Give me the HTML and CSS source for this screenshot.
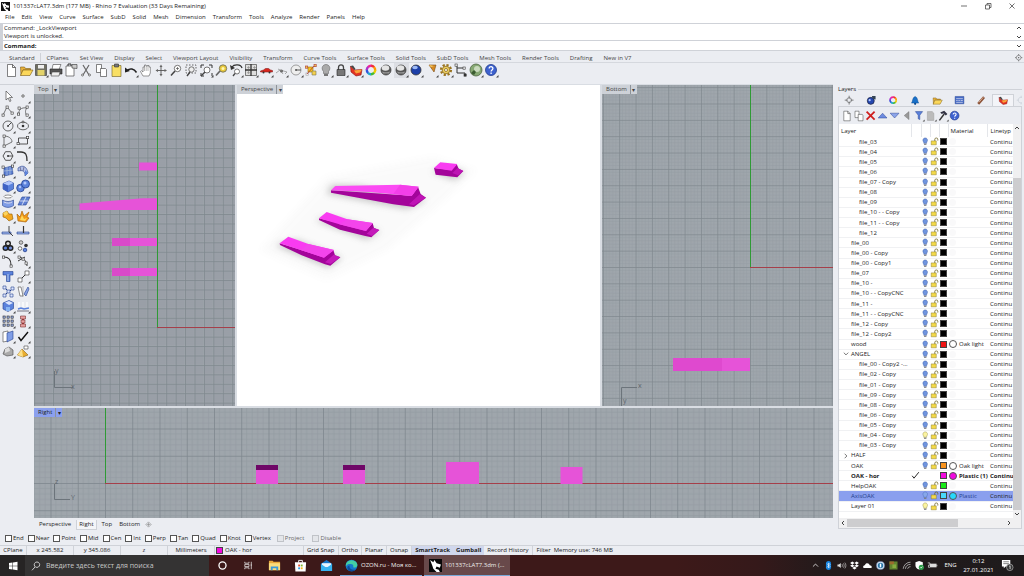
FILE: index.html
```html
<!DOCTYPE html>
<html lang="en">
<head>
<meta charset="utf-8">
<title>101337cLAT7.3dm (177 MB) - Rhino 7 Evaluation</title>
<link rel="stylesheet" href="styles.css">
</head>
<body>
<header class="titlebar">
  <svg class="app-icon" viewBox="0 0 12 12"><rect width="12" height="12" fill="#111"/><path d="M1 1l3 2 1-2 2 3 4 1-1 3-3-1-1 2 3 1 1 2H7L4 9 3 6z" fill="#fff"/><path d="M5 5l2 1-1 1z" fill="#111"/></svg>
  <h1 class="title">101337cLAT7.3dm (177 MB) - Rhino 7 Evaluation (33 Days Remaining)</h1>
  <div class="window-buttons">
    <button aria-label="Minimize"><svg viewBox="0 0 10 10"><path d="M2 5h6" class="ln"/></svg></button>
    <button aria-label="Restore"><svg viewBox="0 0 10 10"><path d="M2.500 4h4v4h-4zM4 4V2.500h4v4H6.500" class="ln"/></svg></button>
    <button aria-label="Close"><svg viewBox="0 0 10 10"><path d="M2.500 2.500l5 5m0-5l-5 5" class="ln"/></svg></button>
  </div>
</header>
<nav class="menu" id="menu"></nav>
<section class="command">
  <div class="history"><p>Command: _LockViewport</p><p>Viewport is unlocked.</p></div>
  <label class="prompt"><b>Command:</b><input type="text" aria-label="Command"></label>
  <div class="command-scroll"><svg viewBox="0 0 8 8"><path d="M2 5l2-2 2 2"/></svg><svg viewBox="0 0 8 8"><path d="M2 3l2 2 2-2"/></svg><svg viewBox="0 0 8 8"><path d="M2 3l2 2 2-2"/></svg></div>
</section>
<nav class="tabs" id="tabs"></nav>
<div class="toolbar" id="toolbar"></div>

<div class="work">
  <aside class="tools" id="tools"></aside>
  <div class="center">
    <main class="views">
      <section class="view top">
        <svg class="scene">
          <defs>
            <pattern id="gTop" width="9.430" height="9.430" x="122.800" y="242.200" patternUnits="userSpaceOnUse"><rect width="9.430" height="9.430" fill="#9fa6ac"/><path d="M1.886 0v9.430M3.772 0v9.430M5.658 0v9.430M7.544 0v9.430M0 1.886h9.430M0 3.772h9.430M0 5.658h9.430M0 7.544h9.430" stroke="#939aa1" stroke-width=".6"/><path d="M.4 0v9.430M0 .4h9.430" stroke="#7e868e" stroke-width=".8"/></pattern>
          </defs>
          <rect width="100%" height="100%" fill="url(#gTop)"/>
          <rect class="y-axis" x="123" y="0" width="1" height="242"/><rect class="x-axis" x="123" y="242" width="100%" height="1"/>
          <g fill="#e653d8"><rect x="105" y="77.500" width="18" height="8"/><path d="M45.500 118.500L100 114l8-.7h15V125H45.500z"/><rect x="78" y="153" width="45" height="8"/><rect x="78" y="183" width="45" height="8"/></g>
          <path d="M78 153h18v8H78zM78 183h18v8H78z" fill="#d94ac9"/>
          <path d="M20.500 286v16.500H39" class="axis"/><text x="21" y="288" class="axis-label">y</text><text x="37" y="304" class="axis-label">x</text>
        </svg>
        <h2 class="view-title"><span>Top</span><button aria-label="Top view menu">▾</button></h2>
      </section>
      <section class="view perspective">
        <svg class="scene">
          <defs><filter id="soft" x="-50%" y="-50%" width="200%" height="200%"><feGaussianBlur stdDeviation="11"/></filter></defs>
          <g transform="translate(23 65) scale(.3333)">
            <g filter="url(#soft)" opacity=".42" fill="#777"><path d="M515 65L585 90L615 66L560 50zM200 130L440 176L500 150L300 108L215 105zM165 210L320 268L360 244L220 200zM45 285L205 352L245 324L110 270z"/></g>
            <g filter="url(#soft)" opacity=".03" fill="#777"><path d="M0 300L200 390L380 300L520 180L650 60L520 20L200 80z"/></g>
            <path d="M522 54L574 60L590 42L596 56L610 63L592 82L527 74z" fill="#a3049a"/><path d="M522 54L541 37L592 42L575 62z" fill="#f93bf1"/><path d="M577 69l16-15 17 9-16 13z" fill="#bd14b3"/>
            <path d="M213 121L455 137L474 110L482 132L498 143L462 171L400 163L213 128z" fill="#a3049a"/><path d="M213 121L226 108L420 104L476 110L455 138L400 133L330 126z" fill="#fb4bf3"/><path d="M400 132L420 104L476 110L455 138z" fill="#f33fe9"/><path d="M447 163l32-30 19 10-37 23z" fill="#bf14b5"/>
            <path d="M177 205L319 240L338 219L342 234L358 240L334 262L316 258L240 239L177 210z" fill="#a3049a"/><path d="M177 205L200 186L262 208L338 219L318 243L238 223z" fill="#f93bf1"/><path d="M238 223L262 208L338 219L318 243z" fill="#f345eb"/><path d="M320 251l20-18 18 7-22 18z" fill="#c41aba"/>
            <path d="M59 280L190 321L220 300L225 316L241 322L211 347L195 343L125 316L60 285z" fill="#a3049a"/><path d="M59 280L85 260L145 282L222 300L192 323L122 300z" fill="#f93bf1"/><path d="M122 300L145 282L222 300L192 323z" fill="#f345eb"/><path d="M195 337l26-23 20 8-29 20z" fill="#c41aba"/>
          </g>
        </svg>
        <h2 class="view-title"><span>Perspective</span><button aria-label="Perspective view menu">▾</button></h2>
      </section>
      <section class="view bottom">
        <svg class="scene">
          <defs><pattern id="gBottom" width="16.350" height="16.350" x="148" y="182" patternUnits="userSpaceOnUse"><rect width="16.350" height="16.350" fill="#9fa6ac"/><path d="M3.270 0v16.350M6.540 0v16.350M9.810 0v16.350M13.080 0v16.350M0 3.270h16.350M0 6.540h16.350M0 9.810h16.350M0 13.080h16.350" stroke="#959ca3" stroke-width=".6"/><path d="M.4 0v16.350M0 .4h16.350" stroke="#7f878f" stroke-width=".8"/></pattern></defs>
          <rect width="100%" height="100%" fill="url(#gBottom)"/>
          <rect class="y-axis" x="148" y="0" width="1" height="182"/><rect class="x-axis" x="148" y="182" width="100%" height="1"/>
          <rect x="71" y="273" width="77" height="13" fill="#e653d8"/><rect x="71" y="273" width="49" height="13" fill="#df49cf"/>
          <path d="M19.500 322v-19.500H35" class="axis"/><text x="36" y="303" class="axis-label">x</text><text x="21" y="318" class="axis-label">y</text>
        </svg>
        <h2 class="view-title"><span>Bottom</span><button aria-label="Bottom view menu">▾</button></h2>
      </section>
      <section class="view right">
        <svg class="scene">
          <defs><pattern id="gRight" width="27.250" height="27.250" x="71" y="75" patternUnits="userSpaceOnUse"><rect width="27.250" height="27.250" fill="#9fa6ac"/><path d="M5.450 0v27.250M10.900 0v27.250M16.350 0v27.250M21.800 0v27.250M0 5.450h27.250M0 10.900h27.250M0 16.350h27.250M0 21.800h27.250" stroke="#949ba1" stroke-width=".7"/><path d="M.5 0v27.250M0 .5h27.250" stroke="#7f878f" stroke-width=".8"/></pattern></defs>
          <rect width="100%" height="100%" fill="url(#gRight)"/>
          <rect class="y-axis" x="71" y="0" width="1" height="75"/><rect class="x-axis" x="71" y="75" width="100%" height="1"/>
          <g fill="#e653d8"><rect x="222" y="57" width="22" height="19"/><rect x="309" y="57" width="22" height="19"/><rect x="412" y="54" width="33" height="22"/><rect x="526.500" y="59" width="22" height="17"/></g>
          <path d="M222 57h22v5h-22zM309 57h22v5h-22z" fill="#6f0767"/>
          <path d="M20.500 76v15.500H36" class="axis"/><text x="21" y="76" class="axis-label">z</text><text x="37" y="92" class="axis-label">Y</text>
        </svg>
        <h2 class="view-title active"><span>Right</span><button aria-label="Right view menu">▾</button></h2>
      </section>
    </main>
    <nav class="view-tabs"><a href="#">Perspective</a><a href="#" class="on">Right</a><a href="#">Top</a><a href="#">Bottom</a><button aria-label="New layout"><svg viewBox="0 0 8 8"><path d="M4 1l3 3-3 3-3-3zM4 2v4M2 4h4" fill="none" stroke="#888" stroke-width=".7"/></svg></button></nav>
  </div>
  <aside class="panel">
    <h2 class="panel-title">Layers</h2>
    <div class="panel-tabs" id="panelTabs"></div>
    <div class="panel-box">
      <div class="panel-tools" id="panelTools"></div>
      <div class="list">
        <div class="list-body">
          <table>
            <colgroup><col class="c-name"><col class="c-cur"><col class="c-ico"><col class="c-ico"><col class="c-ico"><col class="c-mat"><col class="c-line"></colgroup>
            <thead><tr><th>Layer</th><th></th><th></th><th></th><th></th><th>Material</th><th>Linetyp</th></tr></thead>
            <tbody id="layers"></tbody>
          </table>
        </div>
        <div class="vscroll"><svg viewBox="0 0 8 8"><path d="M2 5l2-2 2 2"/></svg><i></i><svg viewBox="0 0 8 8"><path d="M2 3l2 2 2-2"/></svg></div>
      </div>
      <div class="hscroll"><svg viewBox="0 0 8 8"><path d="M5 2L3 4l2 2"/></svg><i></i><svg viewBox="0 0 8 8"><path d="M3 2l2 2-2 2"/></svg></div>
    </div>
  </aside>
</div>

<div class="osnaps" id="osnaps"></div>
<footer class="status">
  <span class="s-plane">CPlane</span><span class="s-coord">x 245.582</span><span class="s-coord">y 345.086</span><span class="s-coord">z</span><span class="s-units">Millimeters</span><span class="s-layer"><i></i>OAK - hor</span>
  <button>Grid Snap</button><button>Ortho</button><button>Planar</button><button>Osnap</button><button class="on">SmartTrack</button><button class="on">Gumball</button><button>Record History</button><button class="last">Filter</button><span class="s-mem">Memory use: 746 MB</span>
</footer>
<div class="taskbar">
  <button class="start" aria-label="Start"><svg viewBox="0 0 10 10"><path d="M1 2l3.500-.5v3.200H1zM5 1.400L9.500.7v4H5zM1 5.300h3.500v3.200L1 8zM5 5.300h4.500v4L5 8.600z" fill="#fff"/></svg></button>
  <label class="search"><svg viewBox="0 0 10 10"><path d="M6 1a2.700 2.700 0 1 1-.1 0zM4 6L1 9.300" fill="none" stroke="#ddd" stroke-width=".9"/></svg><input type="text" placeholder="Введите здесь текст для поиска" aria-label="Поиск"></label>
  <button class="pin" aria-label="Cortana"><svg viewBox="0 0 14 14"><circle cx="7" cy="7" r="3.800" fill="none" stroke="#fff" stroke-width="1.400"/></svg></button>
  <button class="pin" aria-label="Task view"><svg viewBox="0 0 14 14"><path d="M3 3v1.500h4.500V3M3 11V9.500h4.500V11M3 5.800h4.500v2.400H3zM10 3v8M9.300 6.500h1.400" fill="none" stroke="#eee" stroke-width=".8"/></svg></button>
  <button class="pin" aria-label="Explorer"><svg viewBox="0 0 14 14"><path d="M1 2h4l1 1h7v9H1z" fill="#e9a93b"/><path d="M1 4.500h12V12H1z" fill="#fbdc7c"/><path d="M3 12V8h8v4H9v-2H5v2z" fill="#3a9ad9"/></svg></button>
  <button class="pin" aria-label="Store"><svg viewBox="0 0 14 14"><path d="M5 4V1.500h4V4" fill="none" stroke="#fff"/><path d="M1 3.500h12l-.5 10h-11z" fill="#fff"/><path d="M4.500 6h2v2h-2z" fill="#e8502f"/><path d="M7.300 6h2v2h-2z" fill="#7cb82f"/><path d="M4.500 9h2v2h-2z" fill="#2f9fe8"/><path d="M7.300 9h2v2h-2z" fill="#f7b51c"/></svg></button>
  <button class="pin" aria-label="Mail"><svg viewBox="0 0 14 14"><path d="M1 5l6-4 6 4v8H1z" fill="#1877c9"/><path d="M2 4.500h10V9H2z" fill="#e8f5ff"/><path d="M1 5.500l6 4 6-4V13H1z" fill="#36b2f0"/></svg></button>
  <button class="task"><svg viewBox="0 0 14 14"><circle cx="7" cy="7" r="6.300" fill="#1679cc"/><path d="M1 5.500C2.500.5 11-.5 13.200 5.500c.6 3-2 4-4.700 3.500C10 7 8 5 5.500 5.500 3.500 5.500 2 6 .9 8z" fill="#44cfa5"/><path d="M5 7c-1 3 2 5.500 6.500 4.200C9 14.500 3 14 2.500 9.500 2.500 8 4 7 5 7z" fill="#0b4c9a"/></svg>OZON.ru - Моя ко...</button>
  <button class="task on"><svg viewBox="0 0 12 12"><rect width="12" height="12" fill="#080808"/><path d="M1 1l3 2 1-2 2 3 4 1-1 3-3-1-1 2 3 1 1 2H7L4 9 3 6z" fill="#fff"/></svg>101337cLAT7.3dm (...</button>
  <div class="tray" id="tray"></div>
  <button class="lang">ENG</button>
  <time class="clock"><span>0:12</span><span>27.01.2021</span></time>
  <button class="notify" aria-label="Notifications"><svg viewBox="0 0 14 14"><path d="M1 1h9v7H5L3 10V8H1z" fill="#fff"/><path d="M2.500 3h6M2.500 5h6" stroke="#444" stroke-width=".7"/><circle cx="9.500" cy="9" r="3.500" fill="#333" stroke="#bbb" stroke-width=".7"/><path d="M9 7.800l.8-.6v3.600" fill="none" stroke="#fff" stroke-width=".8"/></svg></button>
</div>
<script src="app.js"></script>
</body>
</html>
```
FILE: styles.css
```css
* { box-sizing: border-box; }
body {
  --ui: #ebedf2;
  --line: #cfd2d8;
  margin: 0;
  min-height: 100vh;
  display: flex;
  flex-direction: column;
  background: var(--ui);
  color: #222;
  font: 6px/10px "Open Sans", "Noto Sans", sans-serif;
  overflow: hidden;
}
button, input { font: inherit; color: inherit; }
button { border: 0; padding: 0; background: none; }
h1, h2, p { margin: 0; font: inherit; }
a { color: inherit; text-decoration: none; }
svg { display: block; }
.ln { fill: none; stroke: #333; stroke-width: 0.7; }

.titlebar { display: flex; align-items: center; height: 12px; background: #fff; padding-left: 1px; gap: 3px; }
.app-icon { width: 9px; height: 9px; }
.title { flex: 1; }
.window-buttons { display: flex; }
.window-buttons button { width: 24px; display: flex; justify-content: center; }
.window-buttons svg { width: 10px; height: 10px; }

.menu { display: flex; height: 11px; padding-left: 5px; gap: 7px; background: #fff; line-height: 11px; }
.command { position: relative; background: #fff; border: 1px solid var(--line); border-width: 1px 0 1px 3px; margin-bottom: 2px; }
.history { padding-left: 1px; line-height: 8px; border-bottom: 1px solid var(--line); }
.prompt { display: flex; align-items: center; height: 9px; padding-left: 1px; gap: 2px; }
.prompt input { flex: 1; border: 0; outline: 0; padding: 0; height: 8px; background: none; }
.command-scroll { position: absolute; right: 1px; top: 0; bottom: 0; display: flex; flex-direction: column; justify-content: space-between; }
.command-scroll svg { width: 8px; height: 8px; fill: none; stroke: #444; }

.tabs { display: flex; height: 10px; border-bottom: 1px solid #d5d8de; color: #444; }
.tabs a { padding: 0 5px 0 6px; line-height: 10px; white-space: nowrap; }
.tabs a:first-child { padding-left: 9px; border-right: 1px solid var(--line); }
.tabs button { margin-left: auto; width: 10px; }
.toolbar { display: flex; padding: 0 4px; height: 21px; }
.toolbar button, .tools button { width: 15px; height: 15px; }
.toolbar button.pressed { background: #dcdee4; }
.toolbar svg, .tools svg { width: 15px; height: 15px; }

.work { flex: 1; display: flex; min-height: 0; }
.tools { width: 34px; flex: none; display: grid; grid-template-columns: 15px 15px; grid-auto-rows: 15px; align-content: start; padding: 4px 1px; border-top: 1px solid var(--line); }
.center { flex: 1; display: flex; flex-direction: column; min-width: 0; }
.views { flex: 1; display: grid; grid-template-columns: 201fr 363fr 231fr; grid-template-rows: 321fr 110fr; gap: 2px; background: #d9dde3; border-top: 1px solid #d9dde3; }
.view { position: relative; overflow: hidden; min-width: 0; min-height: 0; background: #fff; }
.view.right { grid-column: 1 / -1; }
.scene { position: absolute; inset: 0; width: 100%; height: 100%; }
.x-axis, .y-axis { shape-rendering: crispEdges; fill: #a53f4a; }
.y-axis { fill: #2f9a35; }
.axis { fill: none; stroke: #6c747b; }
.axis-label { font-size: 7px; fill: #5d656d; }
.view-title { position: absolute; left: 0; top: 0; display: flex; height: 9px; line-height: 9px; padding-left: 4px; background: #cdd1d7; color: #444; }
.view-title button { width: 7px; margin-left: 3px; border-left: 1px solid #8d939a; line-height: 8px; }
.view-title.active { background: #8ba0ee; color: #222; }
.view-tabs { display: flex; align-items: center; height: 13px; padding-left: 3px; gap: 3px; }
.view-tabs a { padding: 0 2px; line-height: 9px; }
.view-tabs .on { border: 1px solid var(--line); border-top: 0; background: #f4f5f8; }
.view-tabs button, .view-tabs svg { width: 7px; height: 7px; }

.panel { width: 191px; flex: none; padding: 1px 2px 2px 5px; display: flex; flex-direction: column; }
.panel-title { height: 9px; line-height: 9px; display: flex; align-items: center; gap: 2px; }
.panel-title::after { content: ""; flex: 1; border-top: 1px solid var(--line); }
.panel-tabs { display: flex; height: 12px; overflow: hidden; }
.panel-tabs button { flex: none; width: 22px; display: flex; justify-content: center; align-items: center; }
.panel-tabs button.on { background: #f3f4f8; border: 1px solid var(--line); border-bottom: 0; }
.panel-tabs button:last-child { width: 14px; opacity: 0.3; }
.panel-tabs svg { width: 11px; height: 11px; }
.panel-box { flex: 1; display: flex; flex-direction: column; border: 1px solid var(--line); min-height: 0; }
.panel-tools { display: flex; align-items: center; height: 17px; padding-left: 2px; }
.panel-tools svg { width: 12px; height: 12px; }
.list { flex: 1; display: flex; background: #fff; min-height: 0; }
.list-body { flex: 1; min-width: 0; overflow: hidden; padding-bottom: 6px; }
.list table { width: 100%; height: 100%; border-collapse: collapse; table-layout: fixed; line-height: 8px; }
.c-cur { width: 10px; }
.c-ico { width: 9px; }
.c-mat { width: 39px; }
.c-line { width: 26px; }
.list th { font-weight: 400; text-align: left; padding: 0 0 0 2px; height: 13px; border-right: 1px solid #e4e6ea; white-space: nowrap; }
.list td { padding: 0; border-bottom: 1px solid #f0f1f3; white-space: nowrap; }
.list td svg { width: 9px; height: 9px; }
.list td:first-child { padding-left: 12px; }
.list .child td:first-child { padding-left: 20px; }
.list .group td:first-child { padding-left: 2px; }
.list .group td:first-child svg { display: inline-block; width: 10px; height: 8px; vertical-align: middle; }
.list .current { font-weight: 700; }
.list .selected { background: #8a9fee; color: #24408c; }
.list .selected td:last-child { color: #222; }
.swatch { display: block; width: 7px; height: 7px; border: 1px solid #444; margin-left: 1px; }
.material { display: flex; align-items: center; gap: 2px; padding-left: 1px; }
.material i { width: 8px; height: 8px; border: 1px solid #555; border-radius: 50%; flex: none; }
.blank { display: block; width: 7px; height: 7px; margin-left: 1px; border-radius: 50%; background: #f9f9fa; }
.list td:last-child, .list th:last-child { padding-left: 3px; border-right: 0; }
.vscroll { width: 8px; background: #f0f0f1; display: flex; flex-direction: column; align-items: center; }
.vscroll i { flex: 1; width: 8px; margin: 46px 0 0; background: #cdcdcf; }
.vscroll svg, .hscroll svg { width: 8px; height: 8px; fill: none; stroke: #444; flex: none; }
.hscroll { display: flex; align-items: center; height: 10px; background: #f0f0f1; }
.hscroll i { width: 111px; height: 8px; background: #cdcdcf; }
.hscroll svg:last-child { margin-left: auto; margin-right: 8px; }

.osnaps { display: flex; align-items: center; height: 12px; padding-left: 5px; gap: 4px; margin: 1px 0; }
.osnaps label { display: flex; align-items: center; gap: 1px; }
.osnaps input { appearance: none; width: 7px; height: 7px; margin: 0; border: 1px solid #555; background: #fff; }
.osnaps input:disabled { border-color: #c0c3c8; background: #e4e6ea; }
.osnaps .off { color: #666; padding-left: 2px; }
.osnaps .off + .off { padding-left: 4px; }

.status { display: flex; height: 10px; border-top: 1px solid var(--line); line-height: 9px; }
.status > * { border-right: 1px solid var(--line); text-align: center; white-space: nowrap; }
.status button { padding: 0 3px; }
.status .on { background: #d0d7ed; font-weight: 700; border: 0; }
.status .last { border: 0; padding-left: 4px; }
.s-plane { width: 27px; }
.s-coord { width: 47px; }
.s-units { width: 47px; }
.s-layer { width: 89px; display: flex; align-items: center; gap: 2px; padding-left: 1px; }
.s-layer i { width: 7px; height: 7px; background: #f20adf; border: 1px solid #444; }
.status .s-mem { flex: 1; text-align: left; border-right: 0; }

.taskbar { display: flex; height: 21px; background: linear-gradient(90deg, #3d1919 0 66%, #35191a 74%, #241a1b 80%, #1e1b1c); color: #fff; line-height: 21px; }
.start { width: 25px; background: #262424; display: flex; align-items: center; justify-content: center; }
.start svg { width: 10px; height: 10px; }
.search { width: 184px; display: flex; align-items: center; background: #343333; padding-left: 6px; gap: 5px; font-size: 7px; }
.search svg { width: 10px; height: 10px; }
.search input { flex: 1; min-width: 0; border: 0; padding: 0; background: none; outline: 0; }
.search input::placeholder { color: #c8c8c8; opacity: 1; }
.pin { width: 26px; display: flex; align-items: center; justify-content: center; }
.pin svg { width: 13px; height: 13px; }
.task { width: 82px; display: flex; align-items: center; gap: 3px; padding-left: 5px; margin-left: 1px; border-bottom: 1px solid #78a8d8; white-space: nowrap; color: #eee; }
.task svg { width: 13px; height: 13px; flex: none; }
.task.on { width: 86px; background: #68494a; margin-left: 2px; }
.tray { margin-left: auto; display: flex; align-items: center; }
.tray button { width: 13px; height: 13px; display: flex; align-items: center; justify-content: center; }
.tray svg { width: 11px; height: 11px; }
.lang { width: 23px; }
.clock { width: 33px; display: flex; flex-direction: column; align-items: center; justify-content: center; line-height: 9px; }
.notify { width: 25px; display: flex; justify-content: center; align-items: center; margin-right: 4px; }
.notify svg { width: 13px; height: 13px; }
```
FILE: app.js
```javascript
const $ = (id) => document.getElementById(id);
const svg = (body, size = 15) => `<svg viewBox="0 0 ${size} ${size}">${body}</svg>`;
const s = (d, c = '#333', w = 1) => `<path d="${d}" fill="none" stroke="${c}" stroke-width="${w}"/>`;
const f = (d, c, k = 'none') => `<path d="${d}" fill="${c}" stroke="${k}" stroke-width=".6"/>`;
const dot = (x, y, r, c, k = 'none') => `<circle cx="${x}" cy="${y}" r="${r}" fill="${c}" stroke="${k}" stroke-width=".8"/>`;
const corner = f('M14.500 12v2.500H12z', '#444');
const box = (x, y, c = '#fff', k = '#333') => `<rect x="${x}" y="${y}" width="2.200" height="2.200" fill="${c}" stroke="${k}" stroke-width=".6"/>`;

const B = '#5b82dc', D = '#24408f';
const ring = ['#e33', '#f90', '#ec0', '#4b3', '#2ac', '#35d', '#a3c', '#e29'].map((c, i) =>
  `<circle cx="7" cy="7" r="4.200" fill="none" stroke="${c}" stroke-width="2.400" stroke-dasharray="3.500 30" transform="rotate(${i * 45 - 90} 7 7)"/>`).join('');
const ball = (c, l) => dot(7, 7, 5, c, '#333') + `<ellipse cx="6" cy="4.500" rx="2.800" ry="1.700" fill="${l}"/>`;
const greyBall = dot(7, 7, 5, '#555', '#444') + `<ellipse cx="6.500" cy="5" rx="3.800" ry="2.800" fill="#e4e4e4"/>` + f('M3 8.500c2 1 6 1 8 0l-1 2H4z', '#999');
const lens = dot(8.500, 5.500, 3.200, '#fff', '#555') + s('M6 8l-4 4.500', '#444', 1.500);
const page = f('M3.500 1.500h5l3 3v9h-8z', '#fff', '#333') + s('M8.500 1.500v3h3', '#333', .7);
const pie = f('M1.500 3l4 4 7.500-.5-1 5.500-5 1-5-4z', '#e33322', '#811') + f('M5 7.500l8-1-2 3-4 1z', '#f9a33a') + f('M1.500 3l2.500-.5 2.500 3.500-1 1z', '#444');
const help = dot(7, 7, 5.500, '#3e62cf', '#223c8c') + s('M5.200 5.500c0-2.500 3.800-2.300 3.700 0C8.800 7 7.200 6.800 7.100 8.500M7.100 9.600v1.400', '#fff', 1.300);
const folder = f('M1.500 4h4l1 1.500h5V7H4l-2 5.500z', '#e8b23c', '#7c5c14') + f('M4 7h10l-3 5.500H1.500z', '#fbd75a', '#7c5c14');
const bulb = (c, k) => f('M4.500 8.500C1.500 5 4 1.500 7 1.500s5.500 3.500 2.500 7v2h-5z', c, k) + f('M5 11h4v2H5z', '#777');
const copy = f('M2.500 1.500h5v8h-5z', '#fff', '#333') + f('M6.500 5.500h5l1 1v7h-6z', '#fff', '#333');
const funnel = f('M3 2h9L8.500 6.500V12L6.500 11V6.500z', B, D);

const fill = (id, items) => {
  $(id).innerHTML = items.map(([name, art, cls = '']) =>
    `<button aria-label="${name}"${cls ? ` class="${cls}"` : ''}>${svg(art)}</button>`).join('');
};

$('menu').innerHTML = ['File', 'Edit', 'View', 'Curve', 'Surface', 'SubD', 'Solid', 'Mesh', 'Dimension', 'Transform', 'Tools', 'Analyze', 'Render', 'Panels', 'Help']
  .map((t) => `<a href="#">${t}</a>`).join('');
$('tabs').innerHTML = ['Standard', 'CPlanes', 'Set View', 'Display', 'Select', 'Viewport Layout', 'Visibility', 'Transform', 'Curve Tools', 'Surface Tools', 'Solid Tools', 'SubD Tools', 'Mesh Tools', 'Render Tools', 'Drafting', 'New in V7']
  .map((t) => `<a href="#">${t}</a>`).join('') + `<button aria-label="Options">${svg(dot(7, 7, 3.500, 'none', '#555') + dot(7, 7, 1, '#555') + s('M7 1.500v2M7 10.500v2M1.500 7h2M10.500 7h2', '#555'))}</button>`;

fill('toolbar', [
  ['New', page],
  ['Open', folder],
  ['Save', f('M1.500 1.500h11v11h-11z', '#6f6f62', '#333') + f('M4 2h6v3.500H4z', '#eee') + f('M3.500 7h7v5.500h-7z', '#e3d36b') + corner],
  ['Print', f('M4 1.500h8l-2 5H3z', '#fff', '#444') + f('M1 6h12v5H1z', '#555', '#222') + f('M3 9h8l-1 4H2z', '#eee', '#444')],
  ['Properties', f('M2 3h8v10H2z', '#fff', '#333') + f('M8 1.500h5v4L8 5z', '#ccc', '#333') + s('M4 3V1h3v2')],
  ['Cut', s('M4 2l6 10M10 2L4 12', '#666', 1.200) + dot(3.500, 12, 1, '#fff', '#555') + dot(10.500, 12, 1, '#fff', '#555')],
  ['Copy', copy],
  ['Paste', f('M3 2.500h9v11H3z', '#f8df64', '#6a5a22') + f('M5.500 1h4v3h-4z', '#777', '#333')],
  ['Undo', s('M3 7.500c3-2.500 7-2 9.500 2', '#222', 1.500) + f('M1 4.500v5l5-1.500z', '#222') + corner],
  ['Pan', f('M4 13L1.500 8.500l1-.8L4 9V4h1.500V2H7v1h1.500V2.500H10V4h1.300v6L10 13z', '#fff', '#555') + s('M5.500 4v4M7.200 3v5M9 3v5', '#777', .5)],
  ['Move view', s('M7 3v9M3 7.500h9', '#555', .9) + f('M7 1.500l1.500 2.500h-3zM7 13.500l1.500-2.500h-3zM1.500 7.500L4 6v3zM13 7.500L10.500 6v3z', '#666')],
  ['Zoom', lens + s('M7 5.500h3M8.500 4v3', '#555', .7)],
  ['Zoom window', `<rect x="2" y="2" width="10" height="8" fill="none" stroke="#444" stroke-dasharray="1.500 1.500" stroke-width=".8"/>` + dot(7.500, 6.500, 2.700, '#eee', '#555') + s('M6 9l-3 4', '#444', 1.400)],
  ['Zoom extents', s('M2 5V2h3M10 2h3v3M13 10v3M2 10v3h3', '#333') + dot(8, 7, 3, '#fff', '#555') + s('M6 9l-4 4', '#444', 1.400) + corner],
  ['Zoom selected', dot(9, 5.500, 3.700, '#e9c93c', '#665') + dot(9, 5.500, 1.500, '#fff8b0') + s('M6 8l-4 4.500', '#666', 1.700)],
  ['Undo view', s('M3 4c2-3 9-3 10 1', '#333', 1.300) + f('M1 2l1 5 4-2z', '#333') + dot(8, 8.500, 2.500, '#fff', '#555') + s('M6 10.500l-2 2.500', '#444', 1.300) + corner],
  ['Four views', f('M1.500 1.500h11v11h-11z', '#ddd', '#333') + s('M7 1v12M1 7h12', '#333', 1.300) + s('M3 4.500h3M4.500 3v3M9 4.500h3M10.500 3v3M3 9.700h3M4.500 8v3', '#888', .6) + corner],
  ['Set view', f('M1.500 8l3-1 2-1.500h3l2 1.500 2 .5v1.500h-12z', '#d9261d', '#822') + dot(4.500, 9.500, 1, '#333') + dot(10.500, 9.500, 1, '#333') + corner],
  ['CPlane', s('M2 10l4-3 7 2-2 2M6 7l3 4', '#888', .7) + dot(7.500, 8, 1.500, '#666') + s('M4 6l4 2', '#888', .7) + corner],
  ['Osnap', dot(7, 7, 5, '#eee', '#888') + s('M7 7h5', '#555') + dot(7, 7, 1, '#555') + corner],
  ['Select', f('M4 4h5v5H4z', '#f4c321', '#9c6c10') + box(1.500, 3, '#f5d04e', '#a33') + box(10, 1.500, '#f5d04e', '#a33') + f('M8 8h4v4H8z', '#f5d04e', '#775') + box(2, 10, '#fff', '#999') + s('M3 11l7-8', '#a33', .8)],
  ['Hide', bulb('#aaa', '#666') + corner],
  ['Lock', s('M4.500 7V4.500c0-3.500 5-3.500 5 0V7', '#444', 1.300) + f('M3 6.500h8v6H3z', '#777', '#222') + corner],
  ['Layers', pie + corner],
  ['Object properties', ring],
  ['Shade', greyBall],
  ['Render preview', greyBall + corner, 'pressed'],
  ['Render', ball('#1c3fa8', '#9bb8f5') + corner],
  ['Notes', f('M5 2l7 0-2 7z', '#d58a25', '#7a4a10') + f('M5 2l5 1-3 1z', '#f9d06b') + corner],
  ['Options', `<circle cx="7" cy="7" r="5" fill="none" stroke="#9a7420" stroke-width="2.200" stroke-dasharray="2.200 1.700"/>` + dot(7, 7, 3.800, '#eccf62', '#8c6718') + dot(7, 7, 1.500, '#fff', '#8c6718') + corner],
  ['Dimensions', s('M3 3v7h8v2M3 5h6', '#333') + box(1, 1) + box(9, 4) + box(10, 11, '#333')],
  ['Grasshopper', dot(7, 7, 6, '#86a873', '#4b6340') + dot(8, 6, 3, '#c9dabd') + f('M2 10l3-3 2 2-2 3z', '#3b5b31') + corner],
  ['Help', help + corner],
]);

fill('tools', [
  ['Select', f('M5 2v9l2.200-2 1.500 3.500 1.300-.6L8.500 8.500h3z', '#fff', '#333')],
  ['Point', dot(7, 7, 1.200, '#fff', '#444') + corner],
  ['Polyline', s('M2 11l4-8 6 7', '#555', .8) + box(1, 10) + box(5, 2) + box(10, 8) + corner],
  ['Curve', s('M3 11c-1-5 2-8 8-7-2 2-2 5 0 8', '#555', .8) + box(1.500, 9) + box(2, 3) + box(10, 2) + box(10, 10) + corner],
  ['Circle', dot(7, 7, 5, 'none', '#444') + s('M7 7l3.500-3.500', '#444') + dot(7, 7, 1, '#444') + corner],
  ['Ellipse', `<ellipse cx="7" cy="7" rx="5.500" ry="3.800" fill="none" stroke="#444" stroke-width=".8"/>` + dot(7, 7, 1.300, '#333') + dot(7, 3, 1, '#fff', '#333') + corner],
  ['Arc', s('M3 2l0 10 8-4c0-4-4-6-8-6', '#555', .8) + box(2, 1) + box(2, 11) + corner],
  ['Rectangle', s('M2.500 4h9v6h-9z', '#444', .9) + box(1, 8.500) + box(10.500, 2.500) + corner],
  ['Polygon', s('M4.500 2.700h5L12 7l-2.500 4.300h-5L2 7zM7 7h5', '#444', .9) + dot(7, 7, 1, '#333') + corner],
  ['Fillet', s('M1 3h4c5 0 6 3 6 9', '#333', 1.300) + corner],
  ['Surface from points', f('M3 4l8-2 1 8-9 2z', '#5d7fd2', D) + s('M6 3v8M9 3v8M3 7l9-1', '#bcd', .6) + box(1, 2) + box(10.500, 1) + box(1.500, 11) + corner],
  ['Surface edge', f('M2 4c5-4 9-1 10 5l-3 3c0-5-2-6-7-5z', '#b3c0ea', D) + s('M4 3l1 4M8 3l-1 4', '#557', .7) + f('M9 6l3 3-3 3z', B) + corner],
  ['Box', f('M2 4.500L8 2l4.500 2v6L7 13l-5-3z', B, D) + f('M2 4.500L8 2l4.500 2L7 6.500z', '#b3c7fb') + f('M2 4.500l5 2V13l-5-3z', '#3f62c4') + corner],
  ['Boolean union', dot(4.500, 9, 3.800, B, D) + dot(9.500, 5, 4, B, D) + dot(9, 4, 1.500, '#b3c7fb') + dot(4, 8, 1.200, '#b3c7fb') + corner],
  ['Loft', `<ellipse cx="7" cy="2.500" rx="4" ry="1.500" fill="#fff" stroke="#666" stroke-width=".7"/>` + f('M1.500 6c3 2 8 2 11 0v5.500c-3 2.500-8 2.500-11 0z', '#7f9de6', D) + s('M3 8c3 1.500 6 1.500 8 0', '#dde', 1) + corner],
  ['Plane', f('M6 3h8l-4 8H2z', '#5f80d4', D) + s('M10 3l-4 8M4 7h8', '#fff', .7) + corner],
  ['Extrude', f('M2 4l4-2 2 3 3 0 1 5-4 2-3-3-3-1z', '#f2a71f', '#8f5c08') + f('M2 4l4-2 1 3-3 2z', '#fbd45f') + corner],
  ['Explode', f('M2 12L1 5l3 3 2-6 2 5 5-4-2 5 2 1-3 4z', '#f39a17', '#a15d05') + f('M4 11l2-5 2 4 3-1-2 3z', '#fdd95d')],
  ['Trim', f('M1 8h9v2H1z', '#9db4ea', D) + s('M8 2v6l4 4', '#333', .9)],
  ['Split', f('M1 8h12v2H1z', '#9db4ea', D) + s('M7.500 2v7', '#333', 1.200)],
  ['Group', dot(7, 4.500, 3, '#222') + dot(4.500, 9, 3, '#222') + dot(9.500, 9, 3, '#222') + dot(4.500, 9, 1.600, B) + dot(9.500, 9, 1.600, '#7690d8') + dot(7, 4.500, 1.600, '#ddd') + corner],
  ['Ungroup', dot(5, 3.500, 1.800, '#ccc', '#555') + dot(10, 6.500, 1.800, '#333') + dot(4, 9.500, 1.800, '#fff', '#555') + dot(9, 11, 1.800, B, D)],
  ['Join', s('M3 3c5 0 7 3 7 8', '#333', 1.100) + box(1.500, 2) + box(9, 11)],
  ['Edit points', s('M3 3c5 1 8 5 8 9M2 7l7-4', '#333', 1) + box(2, 2) + box(6, 4) + box(9, 8) + corner],
  ['Text', f('M2 2.500h10V6H9v6.500H5.500V6H2z', B, D) + s('M7 5v7', '#cde', .8)],
  ['Scale', f('M9 2h4v4H9z', '#fff', '#333') + f('M2 9h4v4H2z', '#fff', '#333') + s('M6 9l3-3', '#333') + corner],
  ['Array', f('M2 2h3v3H2zM10 3h3v3h-3zM2 10h3v3H2zM9 10h3v3H9zM6 6h3v3H6z', '#dfe7ff', D) + s('M5 5l1 1M5 10l1-1M9 7l1-1', D, 1)],
  ['Mirror', f('M2 3l2 9h3L5 3z', '#fff', '#444') + f('M8 10l4-7 1 2-3 7z', '#8aa4e6', D) + s('M7 2v11', '#888', .5)],
  ['Solid edit', f('M2 4l6-2.500 4.500 2v6L7 12.500 2 10z', B, D) + f('M4 3.500l4-1.500 4 2-4 2z', '#dce6ff') + f('M5 8h4v4H5z', '#87b5f3') + corner],
  ['Project', s('M2 10l3-1 3 1 5-1', B, 1.500) + s('M3 3v5M7 3v5M11 3v5', '#fff', 1.300) + s('M1 12h12', '#445', .7) + corner],
  ['Rectangular array', [2, 6, 10].map((x) => [2, 6, 10].map((y) => box(x, y, '#9db4ea', '#222')).join('')).join('') + corner],
  ['Clamp', s('M7 2v10', '#b33', 2) + f('M4.500 2h5v3h-5zM5 6h4v3H5zM4.500 10h5v3h-5z', '#e9a0a0', '#733') + corner],
  ['Layers', f('M2 3l5-1v10l-5 1z', '#fff', '#444') + f('M6 4l6-2v8l-6 3z', '#7f9de6', D) + corner],
  ['Check', s('M2.500 8l2.500 3.500L12 3', '#111', 1.400) + corner],
  ['Mesh', f('M2 10l2-5 4-2 4 3 0 5-6 1z', '#aaa', '#444') + f('M4 5l4-2 1 4-5 2z', '#ddd') + corner],
  ['Cone', f('M1.500 11L6 5l6 6-5 2z', '#e9ad2f', '#87601a') + f('M1.500 11L6 5l1 8z', '#fbe08a') + f('M8 2h4v3H8z', '#fff', '#444') + corner],
]);

fill('panelTabs', [
  ['Properties', dot(7, 7, 3.300, 'none', '#555') + s('M7 1v4M7 9v4M1 7h4M9 7h4', '#555')],
  ['Render', dot(6.500, 8, 4.800, '#2548b0', '#112') + f('M8 1.500h5V6L9 5z', '#345') + dot(5, 7, 1.500, '#b8ccff')],
  ['Materials', ring],
  ['Notifications', f('M2 11c2-2 1-8 5-9 4 1 3 7 5 9z', '#1970c9', '#0c4b91') + dot(7, 12, 1.500, '#0c4b91')],
  ['Libraries', folder],
  ['Display', f('M1.500 2h12v10h-12z', '#456bc6', D) + s('M3 5h9M3 7.500h2M6 7.500h2M9 7.500h3M3 10h9', '#dde', 1)],
  ['Edit', s('M3 12l8-9', '#8c5338', 3.500) + s('M4 10l6-7', '#e0b79e', 1.200)],
  ['Layers', pie, 'on'],
  ['Sun', dot(7, 7, 4, 'none', '#789') + s('M7 1v3M7 10v3M1 7h3M10 7h3', '#789')],
]);
fill('panelTools', [
  ['New layer', page],
  ['New sublayer', copy],
  ['Delete', s('M2 2l10 10M12 2L2 12', '#cf1d1d', 2.200)],
  ['Move up', f('M1.500 10L7 4l5.500 6z', '#6d8be0', D)],
  ['Move down', f('M1.500 4L7 10l5.500-6z', '#8ba4ea', D)],
  ['Move left', f('M10 2v10L4 7z', '#999', '#777')],
  ['Filter', funnel + corner],
  ['Copy', f('M3 2h6l2 2v9H3z', '#bbb', '#999') + corner],
  ['Tools', s('M3 13l6-8', '#333', 1.800) + f('M4 3l5-2 4 4-2 2-3-3-2 1z', '#334') + corner],
  ['Help', help],
]);

const on = svg(bulb('#6f94de', '#2b4a94'));
const off = svg(bulb('#fbf3a0', '#77702a'));
const lock = svg(s('M8 7V3.500c0-2.500 5-2.500 5 0V6', '#665a16', 1.200) + f('M2 6.500h8.500v6.500H2z', '#f3d94a', '#665a16'));
const dim = svg(bulb('#86a7ea', '#3c5ba8'));
const rows = [];
['file_03', 'file_04', 'file_05', 'file_06', 'file_07 - Copy', 'file_08', 'file_09', 'file_10 - - Copy', 'file_11 - - Copy', 'file_12'].forEach((n) => rows.push({ n, cls: 'child' }));
['file_00', 'file_00 - Copy', 'file_00 - Copy1', 'file_07', 'file_10 -', 'file_10 - - CopyCNC', 'file_11 -', 'file_11 - - CopyCNC', 'file_12 - Copy', 'file_12 - Copy2'].forEach((n) => rows.push({ n }));
rows.push({ n: 'wood', color: '#f01414', mat: ['#fff', 'Oak light'] });
rows.push({ n: 'ANGEL', cls: 'group', arrow: 'M2 3l2.500 2.500L7 3' });
['file_00 - Copy2 -...', 'file_02 - Copy', 'file_01 - Copy', 'file_09 - Copy', 'file_08 - Copy', 'file_06 - Copy', 'file_05 - Copy', 'file_04 - Copy', 'file_03 - Copy']
  .forEach((n) => rows.push({ n, cls: 'child', bulb: n === 'file_04 - Copy' ? off : on }));
rows.push({ n: 'HALF', cls: 'group', arrow: 'M3 2l2.500 2.500L3 7' });
rows.push({ n: 'OAK', color: '#f8931d', mat: ['#fff', 'Oak light'] });
rows.push({ n: 'OAK - hor', cls: 'current', color: '#f20adf', mat: ['#f20adf', 'Plastic (1)'], current: true });
rows.push({ n: 'HelpOAK', color: '#18ec18' });
rows.push({ n: 'AxisOAK', cls: 'selected', color: '#49d8fb', mat: ['#27d8fb', 'Plastic'], bulb: dim });
rows.push({ n: 'Layer 01', bulb: off });

$('layers').innerHTML = rows.map((r) => `<tr class="${r.cls || ''}">
  <td>${r.arrow ? svg(s(r.arrow, '#555', .9), 9) : ''}${r.n}</td>
  <td>${r.current ? svg(s('M2 8l3 4 8-10', '#111', 1.500)) : ''}</td>
  <td>${r.current ? '' : r.bulb || on}</td>
  <td>${r.current ? '' : lock}</td>
  <td><i class="swatch" style="background:${r.color || '#000'}"></i></td>
  <td>${r.mat ? `<span class="material"><i style="background:${r.mat[0]}"></i>${r.mat[1]}</span>` : '<i class="blank"></i>'}</td>
  <td>Continu</td></tr>`).join('');

$('osnaps').innerHTML = ['End', 'Near', 'Point', 'Mid', 'Cen', 'Int', 'Perp', 'Tan', 'Quad', 'Knot', 'Vertex', 'Project', 'Disable']
  .map((n, i) => `<label${i > 10 ? ' class="off"' : ''}><input type="checkbox"${i > 10 ? ' disabled' : ''}>${n}</label>`).join('');

fill('tray', [
  ['Show hidden', s('M4 9l3.500-3.500L11 9', '#fff')],
  ['Bluetooth', `<rect x="4" y="1.500" width="7" height="12" rx="3.500" fill="#1583e0"/>` + s('M5.500 5l4 4-2 2V4l2 2-4 4', '#fff', .8)],
  ['Volume', f('M2 6h2l2.500-2v7L4 9H2z', '#ddd') + s('M8 5.500c1 1.300 1 3 0 4M10 4.500c1.500 2 1.500 4 0 6M12 3.500c2 2.500 2 5.500 0 8', '#ddd', .8)],
  ['Dropbox', f('M4.500 2l3 2-3 2-3-2zM10.500 2l3 2-3 2-3-2zM4.500 6l3 2-3 2-3-2zM10.500 6l3 2-3 2-3-2zM7.500 9l3 2-3 2-3-2z', '#fff')],
  ['OneDrive', f('M3 11c-3-1-1-4 1-4 1-4 6-3 6.500 0C14 7 14 11 12 11z', '#fff')],
  ['1Password', dot(7.500, 7.500, 5.500, '#d7e8f5', '#67a') + dot(7.500, 7.500, 3.700, '#2a74a8') + f('M6.500 5h2v5h-2z', '#fff')],
  ['Graphics', f('M2 2h11v11H2z', '#61842f') + f('M2 2h6v4H2z', '#9c6b2d') + f('M6 6h5v5H6z', '#87ab3f')],
  ['Network', s('M3 12A10 10 0 0 1 13 3M6 12a7 7 0 0 1 7-6M9 12a4 4 0 0 1 4-3', '#ddd', .9)],
  ['Defender', f('M2 3l5-1.500L12 3v4c0 3-2 5-5 6-3-1-5-3-5-6z', '#fff') + dot(10, 10, 3.500, '#2f9e4b') + s('M8.500 10l1 1 2-2', '#fff')],
  ['Battery', f('M4 5h9v5H4z', '#ddd') + f('M13 6.500h1v2h-1z', '#ddd') + s('M1 4h3v3H2v3h2', '#ddd')],
]);
```
